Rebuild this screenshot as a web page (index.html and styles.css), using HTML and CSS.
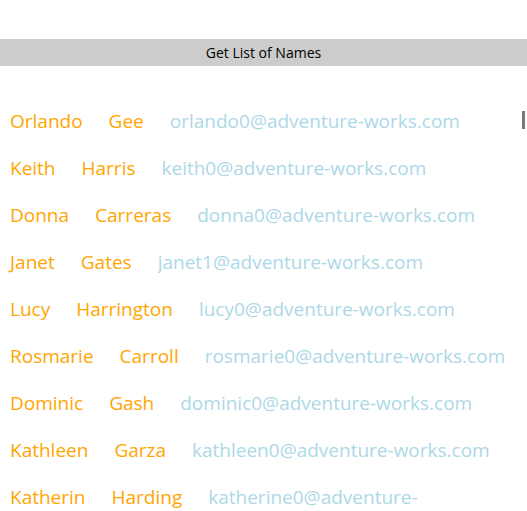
FILE: index.html
```html
<!DOCTYPE html>
<html>
<head>
<meta charset="utf-8">
<link rel="stylesheet" href="styles.css">
</head>
<body>
<div class="page">
  <div class="button">Get List of Names</div>
  <div class="list">
    <div class="row"><span class="name">Orlando</span><span class="name">Gee</span><span class="email">orlando0@adventure-works.com</span></div>
    <div class="row"><span class="name">Keith</span><span class="name">Harris</span><span class="email">keith0@adventure-works.com</span></div>
    <div class="row"><span class="name">Donna</span><span class="name">Carreras</span><span class="email">donna0@adventure-works.com</span></div>
    <div class="row"><span class="name">Janet</span><span class="name">Gates</span><span class="email">janet1@adventure-works.com</span></div>
    <div class="row"><span class="name">Lucy</span><span class="name">Harrington</span><span class="email">lucy0@adventure-works.com</span></div>
    <div class="row"><span class="name">Rosmarie</span><span class="name">Carroll</span><span class="email">rosmarie0@adventure-works.com</span></div>
    <div class="row"><span class="name">Dominic</span><span class="name">Gash</span><span class="email">dominic0@adventure-works.com</span></div>
    <div class="row"><span class="name">Kathleen</span><span class="name">Garza</span><span class="email">kathleen0@adventure-works.com</span></div>
    <div class="row"><span class="name">Katherin</span><span class="name">Harding</span><span class="email">katherine0@adventure-works.com</span></div>
  </div>
  <div class="scroll-indicator"></div>
</div>
</body>
</html>
```
FILE: styles.css
```css
html, body {
  margin: 0;
  padding: 0;
  background: #ffffff;
  overflow: hidden;
}
.page {
  position: relative;
  width: 527px;
  height: 511px;
  overflow: hidden;
  padding-top: 39px;
  box-sizing: border-box;
  font-family: "Open Sans", "Noto Sans", sans-serif;
}
.button {
  height: 27px;
  background: #cccccc;
  color: #000000;
  font-size: 14px;
  line-height: 27px;
  text-align: center;
}
.list {
  padding: 31px 15px 0 10px;
}
.row {
  display: flex;
  align-items: flex-start;
  gap: 26px;
  padding: 11px 0 10px;
  font-size: 19px;
  line-height: 26px;
}
.name {
  color: #ffa500;
  flex: none;
}
.email {
  color: #add8e6;
  flex: 0 1 auto;
  min-width: 0;
  max-height: 26px;
  overflow: hidden;
}
.scroll-indicator {
  position: absolute;
  left: 522px;
  top: 111px;
  width: 3px;
  height: 18px;
  background: #7a7a7a;
}
```
